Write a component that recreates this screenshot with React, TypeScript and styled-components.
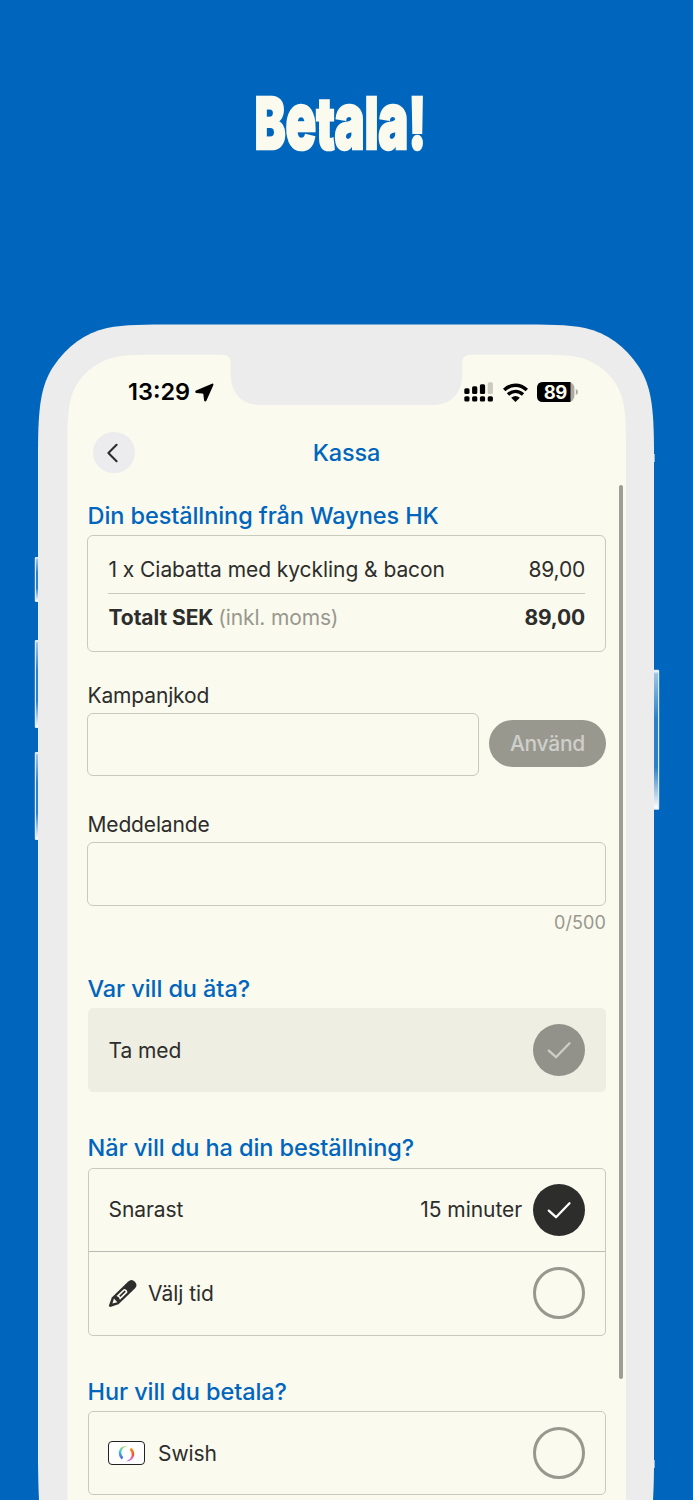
import React from "react";
import styled, { createGlobalStyle } from "styled-components";

const blue = "#0065bd";
const cream = "#fafaee";
const ink = "#2d2d2c";
const muted = "#98988f";
const line = "#c9c9be";

const Global = createGlobalStyle`
  * { box-sizing: border-box; }
  body { margin: 0; background: ${blue}; font-family: Inter, "Liberation Sans", sans-serif; color: ${ink}; }
  h1, h2, p { margin: 0; font-weight: inherit; }
`;

const Page = styled.main`
  position: relative;
  width: 693px;
  height: 1500px;
  overflow: hidden;
  background: ${blue};
`;
const Hero = styled.header`
  height: 355px;
  padding-top: 77px;
  display: flex;
  justify-content: center;
  align-items: flex-start;
`;
const Title = styled.h1`
  font-size: 72px;
  line-height: 91px;
  font-weight: 900;
  color: ${cream};
  -webkit-text-stroke: 2.6px ${cream};
  white-space: nowrap;
  transform: translateX(-6.5px) scaleX(0.64);
`;
const Tall = styled.span`
  font-size: 79px;
  line-height: 0;
`;
const Frame = styled.svg`
  position: absolute;
  inset: 0;
`;
const Screen = styled.section`
  position: relative;
  width: 559px;
  margin-left: 67px;
`;
const StatusBar = styled.div`
  height: 72px;
  padding: 2px 48px 0 61px;
  display: flex;
  justify-content: space-between;
  align-items: center;
`;
const StatusGroup = styled.div<{ $gap: number }>`
  display: flex;
  align-items: center;
  gap: ${(p) => p.$gap}px;
`;
const Clock = styled.span`
  font-size: 23.5px;
  font-weight: 600;
  line-height: 28px;
  color: #000;
`;
const NavBar = styled.div`
  height: 51px;
  padding: 0 26px;
  display: grid;
  grid-template-columns: 42px 1fr 42px;
  align-items: center;
`;
const BackButton = styled.button`
  width: 41.5px;
  height: 41.5px;
  margin-top: -0.5px;
  border: 0;
  border-radius: 50%;
  padding: 0;
  background: #ececee;
  display: grid;
  place-items: center;
`;
const NavTitle = styled.h2`
  color: ${blue};
  text-align: center;
  font-size: 23.5px;
  line-height: 28px;
  font-weight: 500;
  letter-spacing: -0.1px;
`;
const Content = styled.div`
  padding: 23.6px 20px 0 20px;
`;
const Section = styled.section<{ $gap: number }>`
  margin-bottom: ${(p) => p.$gap}px;
`;
const Heading = styled.h2<{ $space?: number }>`
  color: ${blue};
  font-size: 23.5px;
  line-height: 28px;
  font-weight: 500;
  letter-spacing: -0.08px;
  padding-left: 0.5px;
  margin-bottom: ${(p) => p.$space ?? 5.5}px;
  white-space: nowrap;
`;
const Label = styled.label`
  display: block;
  padding-left: 0.5px;
  font-size: 21px;
  line-height: 26px;
  letter-spacing: -0.15px;
  margin-bottom: 4px;
`;
const OrderCard = styled.div`
  height: 117px;
  border: 1.5px solid ${line};
  border-radius: 6px;
  padding: 11px 20px;
`;
const OrderRow = styled.div<{ $bold?: boolean }>`
  display: flex;
  justify-content: space-between;
  align-items: center;
  height: 47px;
  border-bottom: ${(p) => (p.$bold ? "0" : `1px solid ${line}`)};
  padding-left: 0.5px;
  font-size: 21px;
  letter-spacing: -0.06px;
  white-space: nowrap;
  font-weight: ${(p) => (p.$bold ? 700 : 400)};
`;
const Vat = styled.span`
  font-weight: 400;
  color: ${muted};
  letter-spacing: -0.15px;
`;
const Price = styled.span`
  letter-spacing: -0.2px;
`;
const CodeRow = styled.div`
  display: flex;
  align-items: center;
  gap: 10px;
`;
const Field = styled.input`
  flex: 1;
  width: 100%;
  min-width: 0;
  height: 63.5px;
  display: block;
  border: 1.5px solid ${line};
  border-radius: 6px;
  background: transparent;
  outline: 0;
`;
const ApplyButton = styled.button`
  width: 117px;
  height: 46.5px;
  margin-bottom: 2px;
  border: 0;
  border-radius: 24px;
  padding: 0;
  background: #98988f;
  color: #cfcfcb;
  font: 500 21px Inter, sans-serif;
  letter-spacing: -0.25px;
`;
const Counter = styled.p`
  color: ${muted};
  font-size: 18px;
  line-height: 22px;
  text-align: right;
  margin-top: 6px;
  letter-spacing: 0.1px;
`;
const Options = styled.div<{ $disabled?: boolean }>`
  margin-left: 1px;
  border: 1.3px solid ${(p) => (p.$disabled ? "#eeeee2" : line)};
  border-radius: 5px;
  background: ${(p) => (p.$disabled ? "#eeeee2" : "transparent")};
`;
const Option = styled.div`
  height: 82px;
  padding: 0 20px 0 19.5px;
  display: flex;
  align-items: center;
  font-size: 21px;
  letter-spacing: -0.07px;
  & + & { border-top: 1px solid #babab2; height: 84px; }
`;
const OptionText = styled.span<{ $indent?: number }>`
  flex: 1;
  padding-left: ${(p) => p.$indent ?? 0}px;
`;
const Extra = styled.span`
  margin-right: 11px;
`;
const Radio = styled.span<{ $fill?: string }>`
  width: 52px;
  height: 52px;
  border-radius: 50%;
  display: grid;
  place-items: center;
  border: ${(p) => (p.$fill ? "0" : `3px solid ${muted}`)};
  background: ${(p) => p.$fill ?? "transparent"};
`;
const SwishBadge = styled.span`
  width: 37px;
  height: 24px;
  margin-left: -0.5px;
  border: 1.5px solid #222;
  border-radius: 4px;
  background: #fff;
  display: grid;
  place-items: center;
`;
const ScrollThumb = styled.div`
  position: absolute;
  right: 3px;
  top: 130px;
  width: 4px;
  height: 894px;
  border-radius: 2px;
  background: #9e9e95;
`;

const Check = ({ color }: { color: string }) => (
  <svg width="52" height="52" viewBox="0 0 52 52" fill="none">
    <path d="M15.8 26.600 23 33.200 36.500 19.300" stroke={color} strokeWidth="2.300" strokeLinecap="round" strokeLinejoin="round" />
  </svg>
);

const DeviceFrame = () => (
  <Frame width="693" height="1500" viewBox="0 0 693 1500">
    <defs>
      <linearGradient id="key" x1="0" y1="0" x2="0" y2="1">
        <stop offset="0" stopColor="#fff" />
        <stop offset=".02" stopColor="#9cc4e6" />
        <stop offset=".35" stopColor="#2a7fc9" />
        <stop offset=".7" stopColor="#2a7fc9" />
        <stop offset=".96" stopColor="#e4edf4" />
        <stop offset="1" stopColor="#fff" />
      </linearGradient>
    </defs>
    {[[557, 45], [640, 88], [752, 88]].map(([y, h]) => (
      <g key={y}>
        <rect x="34.8" y={y} width="5" height={h} rx="1" fill="#dde9f3" />
        <rect x="36" y={y + 1} width="3" height={h - 2} fill="url(#key)" />
      </g>
    ))}
    <rect x="652" y="669.7" width="7.2" height="140" rx="1" fill="#dde9f3" />
    <rect x="653" y="671" width="5" height="137.5" fill="url(#key)" />
    <rect x="653" y="454" width="1.8" height="8" fill="#b7d0e6" />
    <rect x="653" y="1460" width="1.8" height="8" fill="#b7d0e6" />
    <path
      fill="#ececec"
      d="M38 1462V454C38 406 41 386 53 367C67 346 85 333 107 328C125 324.500 145 324.500 175 324.500H517C547 324.500 567 324.500 585 328C607 333 625 346 639 367C651 386 654 406 654 454V1462C654 1477 653.600 1489 653 1500H39C38.400 1489 38.200 1477 38 1462Z"
    />
    <path
      fill={cream}
      d="M67.500 1500V443C67.500 405 70 394 80 379.500C91 366 104 358.500 121 356C131 354.900 142 354.800 155 354.800H222C228 354.800 230.700 357.500 230.700 363V374C230.700 393 242 405 260 405H433C451 405 462.300 393 462.300 374V363C462.300 357.500 465 354.800 471 354.800H538C551 354.800 562 354.900 572 356C589 358.500 602 366 613 379.500C623 394 626 405 626 443V1500Z"
    />
  </Frame>
);

const SignalIcon = () => (
  <svg width="30" height="20" viewBox="0 0 30 20">
    {[0, 1, 2, 3].map((i) => (
      <g key={i}>
        <rect x={0.3 + i * 7.8} y="14.300" width="5.200" height="5.200" rx="1.500" fill="#000" />
        <rect
          x={0.3 + i * 7.8}
          y={[6.2, 4.3, 2.3, 0.2][i]}
          width="5.200"
          height={[5.8, 7.7, 9.7, 11.8][i]}
          rx="1.500"
          fill={i === 3 ? "#cbcbc0" : "#000"}
        />
      </g>
    ))}
  </svg>
);

const WifiIcon = () => (
  <svg width="25" height="19" viewBox="0 0 25 19" fill="none" stroke="#000" strokeWidth="3.500">
    <path d="M1.200 7Q6.300 2.200 12.500 2.200T23.800 7" />
    <path d="M5 11.500Q8.300 8.300 12.500 8.300T20 11.500" strokeWidth="3.300" />
    <path stroke="none" fill="#000" d="M12.500 19 8.200 14.800Q12.500 11 16.800 14.800Z" />
  </svg>
);

const Battery = () => (
  <svg width="41" height="20" viewBox="0 0 41 20">
    <rect width="37.400" height="20" rx="6" fill="#aaaaa2" />
    <path d="M6 0H33.500V20H6Q0 20 0 14V6Q0 0 6 0Z" fill="#000" />
    <path d="M38.800 6.800Q41 8 41 10T38.800 13.200Z" fill="#aaaaa2" />
    <text x="18.300" y="16.600" textAnchor="middle" fontFamily="Inter" fontSize="18.500" fontWeight="700" letterSpacing="-.4" fill={cream}>89</text>
  </svg>
);

const Pencil = () => (
  <svg width="27" height="27" viewBox="0 0 27 27" overflow="visible">
    <g transform="translate(0 26.800) rotate(-44)">
      <path d="M.8 -.9 8.500 -4.800H31Q36 -4.800 36 0T31 4.800H8.500L.8 .9Q0 0 .8 -.9Z" fill={ink} />
      <path d="M4.800 0 9.300 -2.500V2.500Z" fill={cream} />
      <path d="M12.800 -2.500H23.200Q25.500 0 23.200 2.500H12.800Q14.300 0 12.800 -2.500Z" fill={cream} />
      <path d="M15 0H22.500" stroke={ink} strokeWidth="1.700" />
    </g>
  </svg>
);

const SwishMark = () => (
  <svg width="17" height="17" viewBox="0 0 17 17" fill="none">
    <defs>
      <linearGradient id="sw-l" x1="0" y1="0" x2="0" y2="1">
        <stop offset="0" stopColor="#c3dc5a" />
        <stop offset=".4" stopColor="#3ccfc9" />
        <stop offset=".8" stopColor="#4a7be8" />
        <stop offset="1" stopColor="#5a50d8" />
      </linearGradient>
      <linearGradient id="sw-r" x1="0" y1="0" x2="0" y2="1">
        <stop offset="0" stopColor="#f9a61c" />
        <stop offset=".5" stopColor="#f4502c" />
        <stop offset=".8" stopColor="#e768b8" />
        <stop offset="1" stopColor="#b578f0" />
      </linearGradient>
    </defs>
    <path d="M9.500 .7C4 .2 .5 4 .8 8.600 .9 11 2 13 4 14.500L5.200 12C3 10 2.800 7 4 4.800 5.200 2.700 7 1.400 9.500 .7Z" fill="url(#sw-l)" />
    <path d="M7.500 16.300C13 16.800 16.500 13 16.200 8.400 16.100 6 15 4 13 2.500L11.800 5C14 7 14.200 10 13 12.200 11.800 14.300 10 15.600 7.500 16.300Z" fill="url(#sw-r)" />
  </svg>
);

export default function App() {
  return (
    <Page>
      <Global />
      <DeviceFrame />
      <Hero>
        <Title>
          B<Tall>e</Tall>t<Tall>a</Tall>l<Tall>a</Tall>!
        </Title>
      </Hero>
      <Screen>
        <StatusBar>
          <StatusGroup $gap={5}>
            <Clock>13:29</Clock>
            <svg width="19" height="19" viewBox="0 0 19 19">
              <path d="M17 .7 1 7.400Q-.7 8.700 1 9.900L7.400 10.500Q8.300 10.600 8.400 11.500L9.100 17.600Q10.300 19.300 11.500 17.600L18.400 1.900Q18.600 .2 17 .7Z" fill="#000" />
            </svg>
          </StatusGroup>
          <StatusGroup $gap={9}>
            <SignalIcon />
            <WifiIcon />
            <Battery />
          </StatusGroup>
        </StatusBar>
        <NavBar>
          <BackButton aria-label="Tillbaka">
            <svg width="42" height="42" viewBox="0 0 42 42" fill="none">
              <path d="M23.600 12.800 15.400 21 23.600 29.200" stroke={ink} strokeWidth="2.100" strokeLinecap="round" strokeLinejoin="round" />
            </svg>
          </BackButton>
          <NavTitle>Kassa</NavTitle>
        </NavBar>
        <Content>
          <Section $gap={31}>
            <Heading $space={5}>Din beställning från Waynes HK</Heading>
            <OrderCard>
              <OrderRow>
                <span>1 x Ciabatta med kyckling &amp; bacon</span>
                <Price>89,00</Price>
              </OrderRow>
              <OrderRow $bold>
                <span>
                  Totalt SEK <Vat>(inkl. moms)</Vat>
                </span>
                <Price>89,00</Price>
              </OrderRow>
            </OrderCard>
          </Section>
          <Section $gap={36}>
            <Label>Kampanjkod</Label>
            <CodeRow>
              <Field />
              <ApplyButton>Använd</ApplyButton>
            </CodeRow>
          </Section>
          <Section $gap={41}>
            <Label>Meddelande</Label>
            <Field />
            <Counter>0/500</Counter>
          </Section>
          <Section $gap={42}>
            <Heading>Var vill du äta?</Heading>
            <Options $disabled>
              <Option>
                <OptionText>Ta med</OptionText>
                <Radio $fill="#92928a">
                  <Check color="#cdcdc9" />
                </Radio>
              </Option>
            </Options>
          </Section>
          <Section $gap={42}>
            <Heading>När vill du ha din beställning?</Heading>
            <Options>
              <Option>
                <OptionText>Snarast</OptionText>
                <Extra>15 minuter</Extra>
                <Radio $fill={ink}>
                  <Check color="#fff" />
                </Radio>
              </Option>
              <Option>
                <Pencil />
                <OptionText $indent={12.5}>Välj tid</OptionText>
                <Radio />
              </Option>
            </Options>
          </Section>
          <Section $gap={0}>
            <Heading>Hur vill du betala?</Heading>
            <Options>
              <Option>
                <SwishBadge>
                  <SwishMark />
                </SwishBadge>
                <OptionText $indent={13}>Swish</OptionText>
                <Radio />
              </Option>
            </Options>
          </Section>
        </Content>
        <ScrollThumb />
      </Screen>
    </Page>
  );
}
